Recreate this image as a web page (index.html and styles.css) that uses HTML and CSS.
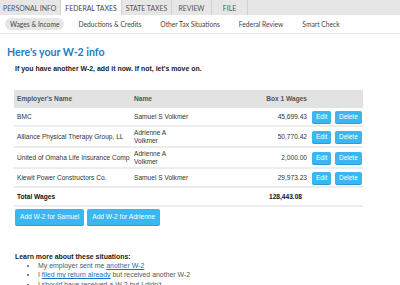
FILE: index.html
```html
<!DOCTYPE html>
<html>
<head>
<meta charset="utf-8">
<link rel="stylesheet" href="styles.css">
</head>
<body>
<nav class="topnav">
  <span class="tab t-personal">Personal Info</span>
  <span class="tab t-federal active">Federal Taxes</span>
  <span class="tab t-state">State Taxes</span>
  <span class="tab t-review">Review</span>
  <span class="tab t-file">File</span>
</nav>
<nav class="subnav">
  <span class="sub current">Wages &amp; Income</span>
  <span class="sub">Deductions &amp; Credits</span>
  <span class="sub">Other Tax Situations</span>
  <span class="sub">Federal Review</span>
  <span class="sub">Smart Check</span>
</nav>
<main class="content">
  <h1 class="title">Here's your W-2 info</h1>
  <p class="intro">If you have another W-2, add it now. If not, let's move on.</p>
  <table class="w2">
    <colgroup>
      <col class="c-emp"><col class="c-name"><col class="c-wage"><col class="c-edit"><col class="c-del">
    </colgroup>
    <thead>
      <tr><th>Employer's Name</th><th>Name</th><th class="num">Box 1 Wages</th><th></th><th></th></tr>
    </thead>
    <tbody>
      <tr><td class="emp">BMC</td><td class="nm">Samuel S Volkmer</td><td class="num">45,699.43</td><td class="bt"><span class="btn sm">Edit</span></td><td class="bt"><span class="btn sm">Delete</span></td></tr>
      <tr class="two"><td class="emp">Alliance Physical Therapy Group, LL</td><td class="nm">Adrienne A<br>Volkmer</td><td class="num">50,770.42</td><td class="bt"><span class="btn sm">Edit</span></td><td class="bt"><span class="btn sm">Delete</span></td></tr>
      <tr class="two"><td class="emp">United of Omaha Life Insurance Comp</td><td class="nm">Adrienne A<br>Volkmer</td><td class="num">2,000.00</td><td class="bt"><span class="btn sm">Edit</span></td><td class="bt"><span class="btn sm">Delete</span></td></tr>
      <tr><td class="emp">Kiewit Power Constructors Co.</td><td class="nm">Samuel S Volkmer</td><td class="num">29,973.23</td><td class="bt"><span class="btn sm">Edit</span></td><td class="bt"><span class="btn sm">Delete</span></td></tr>
      <tr class="total"><td class="emp">Total Wages</td><td></td><td class="num tot">128,443.08</td><td></td><td></td></tr>
    </tbody>
  </table>
  <div class="actions">
    <span class="btn lg">Add W-2 for Samuel</span>
    <span class="btn lg">Add W-2 for Adrienne</span>
  </div>
  <p class="learn">Learn more about these situations:</p>
  <ul class="links">
    <li>My employer sent me <a href="#">another W-2</a></li>
    <li>I <a href="#">filed my return already</a> but received another W-2</li>
    <li>I should have received a W-2 but I didn't</li>
  </ul>
</main>
</body>
</html>
```
FILE: styles.css
```css
html, body {
  margin: 0;
  padding: 0;
  background: #fff;
}
body {
  font-family: "Liberation Sans", Arial, sans-serif;
  color: #333;
  width: 400px;
  height: 285px;
  overflow: hidden;
}
.topnav {
  display: flex;
  height: 15px;
  background: #e6e6e6;
  font-family: Lato, "Open Sans", sans-serif;
  font-size: 6.9px;
  text-transform: uppercase;
  color: #555;
}
.tab {
  display: flex;
  align-items: center;
  justify-content: center;
  box-sizing: border-box;
  border-right: 1px solid #d2d2d2;
  white-space: nowrap;
}
.t-personal { width: 61px; justify-content: flex-start; padding-left: 3px; }
.t-federal { width: 61px; }
.t-state { width: 50px; }
.t-review { width: 40px; }
.t-file { width: 36px; }
.tab.active {
  background: #fff;
  color: #444;
}
.subnav {
  display: flex;
  align-items: center;
  gap: 9px;
  height: 18px;
  padding-left: 5px;
  border-bottom: 1px solid #e8e8e8;
  font-family: Lato, "Open Sans", sans-serif;
  font-size: 6.7px;
  color: #444;
}
.sub {
  padding: 0 5px;
  line-height: 12px;
  height: 12px;
}
.sub.current {
  background: #e6e6e6;
  border-radius: 6px;
}
.content {
  padding-left: 7px;
}
.title {
  margin: 11px 0 0 0;
  font-family: Lato, "Open Sans", sans-serif;
  font-weight: 700;
  font-size: 10.6px;
  line-height: 14px;
  color: #1d7cc6;
}
.intro {
  margin: 6px 0 0 8px;
  font-weight: 700;
  font-size: 6.95px;
  line-height: 8px;
  color: #222;
}
.w2 {
  margin: 17px 0 0 7px;
  width: 349px;
  border-collapse: collapse;
  table-layout: fixed;
  font-size: 6.6px;
  line-height: 7.6px;
}
.c-emp { width: 117px; }
.c-name { width: 61px; }
.c-wage { width: 118px; }
.c-edit { width: 23px; }
.c-del { width: 30px; }
.w2 thead tr {
  background: #e2e2e2;
}
.w2 th {
  height: 18px;
  padding: 0 3px;
  text-align: left;
  font-weight: 700;
  font-size: 6.6px;
  color: #555;
}
.w2 td {
  height: 17px;
  padding: 0 3px;
  border-bottom: 2px solid #ececec;
  white-space: nowrap;
  overflow: hidden;
  vertical-align: middle;
}
.w2 tr.two td {
  height: 19px;
}
.w2 td.emp {
  padding-right: 0;
  overflow: visible;
}
.w2 .num {
  text-align: right;
}
.w2 td.bt {
  padding: 0 0 0 2px;
}
.w2 .total td {
  font-weight: 700;
  color: #111;
}
.w2 td.tot {
  padding-right: 8px;
}
.btn {
  display: inline-block;
  background: #3ab6f0;
  color: #fff;
  border-radius: 2px;
  box-shadow: 0 1px 0 #2a9dd4;
  text-align: center;
}
.btn.sm {
  height: 12px;
  line-height: 12px;
  padding: 0 4px;
  font-size: 6.5px;
}
.actions {
  display: flex;
  gap: 3px;
  margin: 2px 0 0 8px;
}
.btn.lg {
  height: 16px;
  line-height: 16px;
  padding: 0 5px;
  font-size: 6.6px;
}
.learn {
  margin: 28px 0 0 8px;
  font-weight: 700;
  font-size: 6.95px;
  line-height: 8px;
  color: #222;
}
.links {
  margin: 0;
  padding-left: 31px;
  font-size: 6.95px;
  line-height: 9.3px;
  color: #555;
}
.links a {
  color: #1a6fc0;
}
```
